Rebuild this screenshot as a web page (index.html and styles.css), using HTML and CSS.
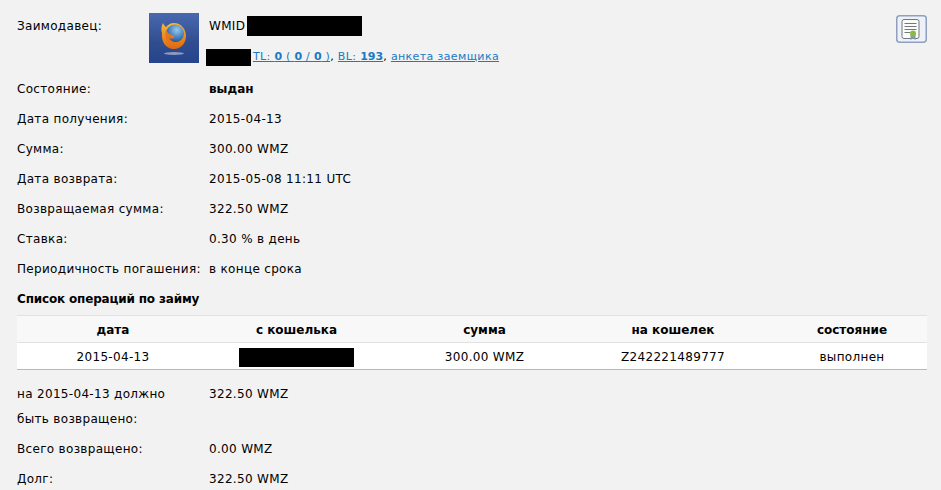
FILE: index.html
```html
<!DOCTYPE html>
<html>
<head>
    <meta charset="utf-8">
    <title>Заем</title>
    <link rel="stylesheet" href="styles.css">
</head>
<body>
    <div class="lender">
        <div class="label lender-label">Заимодавец:</div>
        <svg class="avatar" width="50" height="50" viewBox="0 0 50 50">
            <defs>
                <linearGradient id="bg" x1="0" y1="0" x2="0" y2="1">
                    <stop offset="0" stop-color="#4a68ae"/>
                    <stop offset="0.6" stop-color="#2f4d8e"/>
                    <stop offset="1" stop-color="#26448c"/>
                </linearGradient>
                <radialGradient id="globe" cx="0.6" cy="0.3" r="0.75">
                    <stop offset="0" stop-color="#9cc8e8"/>
                    <stop offset="0.6" stop-color="#3f7fbc"/>
                    <stop offset="1" stop-color="#1d4a8c"/>
                </radialGradient>
                <linearGradient id="fox" x1="0" y1="0" x2="0" y2="1">
                    <stop offset="0" stop-color="#f4b83a"/>
                    <stop offset="1" stop-color="#e0660f"/>
                </linearGradient>
            </defs>
            <rect width="50" height="50" fill="url(#bg)"/>
            <path d="M14 10 C12 14 12 17 13 20 C12 29 17 36 25 36 C32 36 37 30 37 23 C37 16 32 10 25 10 C21 10 19 12 17 14 C16 13 15 12 14 10 Z" fill="url(#fox)"/>
            <circle cx="26" cy="20.5" r="9" fill="url(#globe)"/>
            <path d="M17 17 C19 19 19 21 22 21.5 C24 22 26 23 25 25 C23 26 21 26 20 24 C21 28 26 30 30 28.5 C27 32 19 32 17 26 C16 23 16 20 17 17 Z" fill="#e8741a"/>
            <ellipse cx="25" cy="40.5" rx="10" ry="1.4" fill="#8b9cc4"/>
        </svg>
        <div class="lender-info">
            <div class="wmid">WMID<span class="hidden hidden-wmid"></span></div>
            <div class="links">
                <span class="hidden hidden-name"></span>
                <a href="#">TL: <b>0</b> ( <b>0</b> / <b>0</b> )</a>, <a href="#">BL: <b>193</b></a>, <a href="#">анкета заемщика</a>
            </div>
        </div>
        <a class="cert" href="#">
            <svg width="31" height="28" viewBox="0 0 31 28">
                <rect x="0.75" y="0.75" width="29.5" height="26.5" rx="3" fill="#eef1f6" stroke="#8f9fc0" stroke-width="1.5"/>
                <rect x="6" y="4.5" width="17" height="19" rx="2" fill="#fbfbf8" stroke="#6f7a80"/>
                <path d="M8.5 8.5H20.5M8.5 11.5H20.5M8.5 14.5H20.5M8.5 17.5H14" stroke="#6f7a80" fill="none"/>
                <path d="M14.5 20V25L17 23.5L19.5 25V20Z" fill="#7f9ab8"/>
                <circle cx="17" cy="18.5" r="3" fill="#8fb83f"/>
            </svg>
        </a>
    </div>

    <div class="row"><div class="label">Состояние:</div><div class="value"><b>выдан</b></div></div>
    <div class="row"><div class="label">Дата получения:</div><div class="value">2015-04-13</div></div>
    <div class="row"><div class="label">Сумма:</div><div class="value">300.00 WMZ</div></div>
    <div class="row"><div class="label">Дата возврата:</div><div class="value">2015-05-08 11:11 UTC</div></div>
    <div class="row"><div class="label">Возвращаемая сумма:</div><div class="value">322.50 WMZ</div></div>
    <div class="row"><div class="label">Ставка:</div><div class="value">0.30 % в день</div></div>
    <div class="row"><div class="label">Периодичность погашения:</div><div class="value">в конце срока</div></div>

    <h3 class="title">Список операций по займу</h3>
    <table class="ops">
        <colgroup>
            <col class="col-date"><col class="col-from"><col class="col-sum"><col class="col-to"><col class="col-state">
        </colgroup>
        <thead>
            <tr><th>дата</th><th>с кошелька</th><th>сумма</th><th>на кошелек</th><th class="state">состояние</th></tr>
        </thead>
        <tbody>
            <tr>
                <td>2015-04-13</td>
                <td><span class="hidden hidden-purse"></span></td>
                <td>300.00 WMZ</td>
                <td>Z242221489777</td>
                <td class="state">выполнен</td>
            </tr>
        </tbody>
    </table>

    <div class="row"><div class="label narrow">на 2015-04-13 должно быть возвращено:</div><div class="value">322.50 WMZ</div></div>
    <div class="row"><div class="label">Всего возвращено:</div><div class="value">0.00 WMZ</div></div>
    <div class="row"><div class="label">Долг:</div><div class="value">322.50 WMZ</div></div>
</body>
</html>
```

FILE: styles.css
```css
html {
    background: #f2f2f2;
}
body {
    margin: 0;
    padding: 13px 14px 0 17px;
    font-family: "DejaVu Sans", Verdana, sans-serif;
    font-size: 12px;
    line-height: 25px;
    letter-spacing: 0.32px;
    color: #000;
    background: #f2f2f2;
}

a {
    color: #1a7ac4;
}
b {
    letter-spacing: 0;
}

.row {
    display: flex;
    margin-bottom: 4px;
}
.label {
    width: 192px;
    flex: none;
    padding-top: 1px;
}
.value {
    padding-top: 1px;
}
.narrow {
    width: 160px;
    margin-right: 32px;
}

.lender {
    display: flex;
    margin-bottom: 5px;
    height: 58px;
}
.lender-label {
    width: 132px;
}
.avatar {
    flex: none;
    margin-right: 10px;
}
.lender-info {
    flex: 1;
}
.wmid {
    padding-top: 1px;
}
.links {
    margin: 5px 0 0 -3px;
    font-size: 11px;
    letter-spacing: 0.37px;
}
.cert {
    flex: none;
    height: 28px;
    margin: 2px 0 0 0;
}
.cert svg {
    display: block;
}

.hidden {
    display: inline-block;
    background: #000;
    vertical-align: middle;
}
.hidden-wmid {
    width: 115px;
    height: 20px;
    margin: 0 0 2px 2px;
}
.hidden-name {
    width: 45px;
    height: 17px;
    margin-right: -2px;
}
.hidden-purse {
    width: 115px;
    height: 19px;
}

.title {
    margin: 0 0 3px;
    padding-top: 1px;
    font-size: 12px;
    line-height: 25px;
    letter-spacing: -0.17px;
}

.ops {
    width: 100%;
    margin-bottom: 11px;
    border-collapse: collapse;
    table-layout: fixed;
    background: #fff;
    border-bottom: 1px solid #b8b8b8;
}
.col-date {
    width: 192px;
}
.col-from {
    width: 175px;
}
.col-sum {
    width: 201px;
}
.col-to {
    width: 176px;
}
.ops th {
    padding: 2px 0 0;
    line-height: 24px;
    background: #f8f8f8;
    border-top: 1px solid #e2e2e2;
    border-bottom: 1px solid #e2e2e2;
    font-weight: bold;
    letter-spacing: 0;
}
.ops td {
    padding: 2px 0 0;
    line-height: 24px;
    text-align: center;
}
.ops .state {
    padding-left: 16px;
}
```
